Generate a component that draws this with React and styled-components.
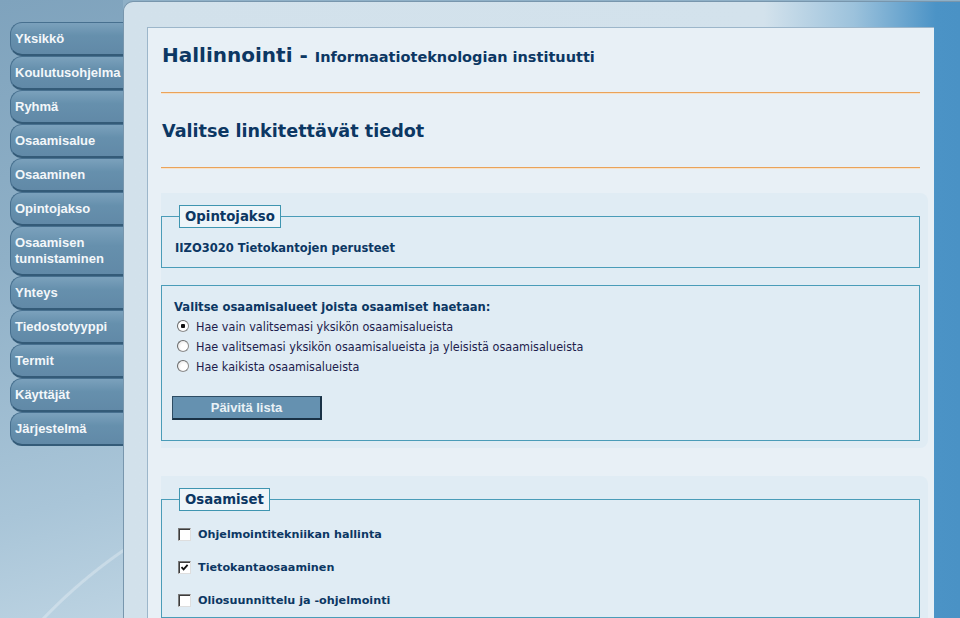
import React from "react";
import styled, { createGlobalStyle } from "styled-components";

const GlobalStyle = createGlobalStyle`
  html, body {
    margin: 0;
    padding: 0;
  }
  body {
    background: #8fb0c7;
    font-family: "DejaVu Sans", Verdana, sans-serif;
    overflow: hidden;
  }
`;

const Page = styled.div`
  display: flex;
  height: 618px;
  overflow: hidden;
`;

const Sidebar = styled.nav`
  width: 123px;
  flex: none;
  padding: 22px 0 0 10px;
  box-sizing: border-box;
  display: flex;
  flex-direction: column;
  background:
    radial-gradient(circle at 420px 980px, transparent 520px, rgba(255,255,255,.28) 521px, rgba(255,255,255,.28) 523px, transparent 524px),
    radial-gradient(circle at 470px 1000px, transparent 470px, rgba(255,255,255,.22) 471px, rgba(255,255,255,.22) 473px, transparent 474px),
    radial-gradient(circle at 520px 1040px, transparent 450px, rgba(255,255,255,.18) 451px, rgba(255,255,255,.18) 453px, transparent 454px),
    linear-gradient(165deg, #7fa3bd 0%, #8fb0c7 40%, #a9c5d8 80%, #bcd3e2 100%);
`;

const Tab = styled.a`
  display: flex;
  align-items: center;
  box-sizing: border-box;
  height: ${(p) => (p.$tall ? 50 : 34)}px;
  padding: 0 0 0 4px;
  background: linear-gradient(#7ba1bc, #6690ad 40%, #6189a7);
  border: 1px solid #47708f;
  border-bottom: 2px solid #345b78;
  border-right: none;
  border-radius: 12px 0 0 12px;
  color: #f3f7fa;
  font: bold 13px/16px "Liberation Sans", Arial, sans-serif;
  white-space: nowrap;
  cursor: pointer;
`;

const Frame = styled.div`
  flex: 1;
  display: flex;
  margin-top: 1px;
  padding: 25px 26px 0 23px;
  border-top: 1px solid #7896ad;
  border-left: 1px solid #7896ad;
  border-top-left-radius: 10px;
  background: linear-gradient(90deg, #d2e1eb 0, #d3e2ec 640px, #9cc2dc 730px, #4b93c6 812px, #4a92c5 100%);
`;

const Panel = styled.main`
  flex: 1;
  padding: 0 6px 0 13px;
  background: #e8f0f6;
  border-top: 1px solid #9cb6ca;
  border-left: 1px solid #9cb6ca;
  color: #0c3763;
  overflow: hidden;
`;

const Title = styled.h1`
  margin: 13px 0 0 1px;
  font-size: 20px;
  line-height: 28px;
  font-weight: bold;
`;

const Sub = styled.span`
  font-size: 14.5px;
  font-weight: bold;
`;

const Rule = styled.div`
  margin: ${(p) => p.$top}px 8px 0 0;
  border-top: 1px solid #eaa35a;
  border-bottom: 1px solid #f6e2cb;
`;

const Heading = styled.h2`
  margin: 25px 0 0 1px;
  font-size: 17.6px;
  line-height: 24px;
  font-weight: bold;
`;

const Block = styled.section`
  margin-top: ${(p) => p.$top}px;
  padding: 12px 8px 7px 0;
  background: #e0ecf4;
  border-radius: 0 8px 8px 0;
`;

const Fieldset = styled.fieldset`
  margin: ${(p) => p.$top || 0}px 0 0 0;
  padding: ${(p) => p.$pad};
  min-width: 0;
  border: 1px solid #4a9cb8;
`;

const Legend = styled.legend`
  margin-left: 4px;
  padding: 0 5px;
  border: 1px solid #3f95b0;
  background: #eef5f9;
  font-size: 13.3px;
  line-height: 21px;
  font-weight: bold;
`;

const Course = styled.div`
  font-size: 11.5px;
  line-height: 16px;
  font-weight: bold;
`;

const Question = styled.div`
  font-size: 11.6px;
  line-height: 18px;
  font-weight: bold;
  margin-left: -1px;
`;

const RadioRow = styled.label`
  display: flex;
  align-items: center;
  height: 20px;
  gap: 7px;
  padding-left: 2px;
  font: 12.5px "DejaVu Sans Condensed", "DejaVu Sans", sans-serif;
  color: #1d1d4c;
`;

const RadioDot = styled.span`
  width: 12px;
  height: 12px;
  box-sizing: border-box;
  border-radius: 50%;
  border: 1px solid #8d8d8d;
  border-top-color: #6a6a6a;
  border-left-color: #6a6a6a;
  background: ${(p) =>
    p.$on
      ? "radial-gradient(circle, #111 0 2px, #fff 2.5px)"
      : "radial-gradient(circle at 60% 60%, #fff 0 3px, #ececec 6px)"};
`;

const Button = styled.button`
  display: block;
  margin: 20px 0 0 -3px;
  width: 150px;
  height: 24px;
  padding: 0;
  background: #6591b0;
  border: 1px solid #2d4c63;
  border-right: 2px solid #1a3246;
  border-bottom: 2px solid #1a3246;
  color: #e9f1f6;
  font: bold 13px "Liberation Sans", Arial, sans-serif;
  cursor: pointer;
`;

const CheckRow = styled.label`
  display: flex;
  align-items: center;
  gap: 7px;
  height: 33px;
  padding-left: 3px;
  font-size: 11.2px;
  font-weight: bold;
`;

const CheckBox = styled.span`
  display: flex;
  align-items: center;
  justify-content: center;
  width: 13px;
  height: 13px;
  box-sizing: border-box;
  background: #fff;
  border: 1px solid;
  border-color: #7a7a7a #dedede #dedede #7a7a7a;
  box-shadow: inset 1px 1px 0 #3c3c3c;
`;

const Check = () => (
  <svg width="9" height="9" viewBox="0 0 9 9">
    <path d="M1.5 4.2 L3.6 6.4 L7.6 1.8" fill="none" stroke="#111" strokeWidth="1.8" />
  </svg>
);

const menu = [
  "Yksikkö",
  "Koulutusohjelma",
  "Ryhmä",
  "Osaamisalue",
  "Osaaminen",
  "Opintojakso",
  ["Osaamisen", "tunnistaminen"],
  "Yhteys",
  "Tiedostotyyppi",
  "Termit",
  "Käyttäjät",
  "Järjestelmä",
];

const radios = [
  "Hae vain valitsemasi yksikön osaamisalueista",
  "Hae valitsemasi yksikön osaamisalueista ja yleisistä osaamisalueista",
  "Hae kaikista osaamisalueista",
];

const skills = [
  { name: "Ohjelmointitekniikan hallinta", on: false },
  { name: "Tietokantaosaaminen", on: true },
  { name: "Oliosuunnittelu ja -ohjelmointi", on: false },
];

export default function App() {
  return (
    <>
      <GlobalStyle />
      <Page>
        <Sidebar>
          {menu.map((item) =>
            Array.isArray(item) ? (
              <Tab key={item[0]} $tall>
                {item[0]}
                <br />
                {item[1]}
              </Tab>
            ) : (
              <Tab key={item}>{item}</Tab>
            )
          )}
        </Sidebar>
        <Frame>
          <Panel>
            <Title>
              Hallinnointi - <Sub>Informaatioteknologian instituutti</Sub>
            </Title>
            <Rule $top={21} />
            <Heading>Valitse linkitettävät tiedot</Heading>
            <Rule $top={24} />

            <Block $top={24}>
              <Fieldset $pad="12px 13px 11px 13px">
                <Legend>Opintojakso</Legend>
                <Course>IIZO3020 Tietokantojen perusteet</Course>
              </Fieldset>
              <Fieldset $top={17} $pad="12px 13px 20px 13px">
                <Question>Valitse osaamisalueet joista osaamiset haetaan:</Question>
                {radios.map((r, i) => (
                  <RadioRow key={r}>
                    <RadioDot $on={i === 0} />
                    {r}
                  </RadioRow>
                ))}
                <Button>Päivitä lista</Button>
              </Fieldset>
            </Block>

            <Block $top={28}>
              <Fieldset $pad="7px 13px 0 13px">
                <Legend>Osaamiset</Legend>
                {skills.map((s) => (
                  <CheckRow key={s.name}>
                    <CheckBox>{s.on && <Check />}</CheckBox>
                    {s.name}
                  </CheckRow>
                ))}
              </Fieldset>
            </Block>
          </Panel>
        </Frame>
      </Page>
    </>
  );
}
